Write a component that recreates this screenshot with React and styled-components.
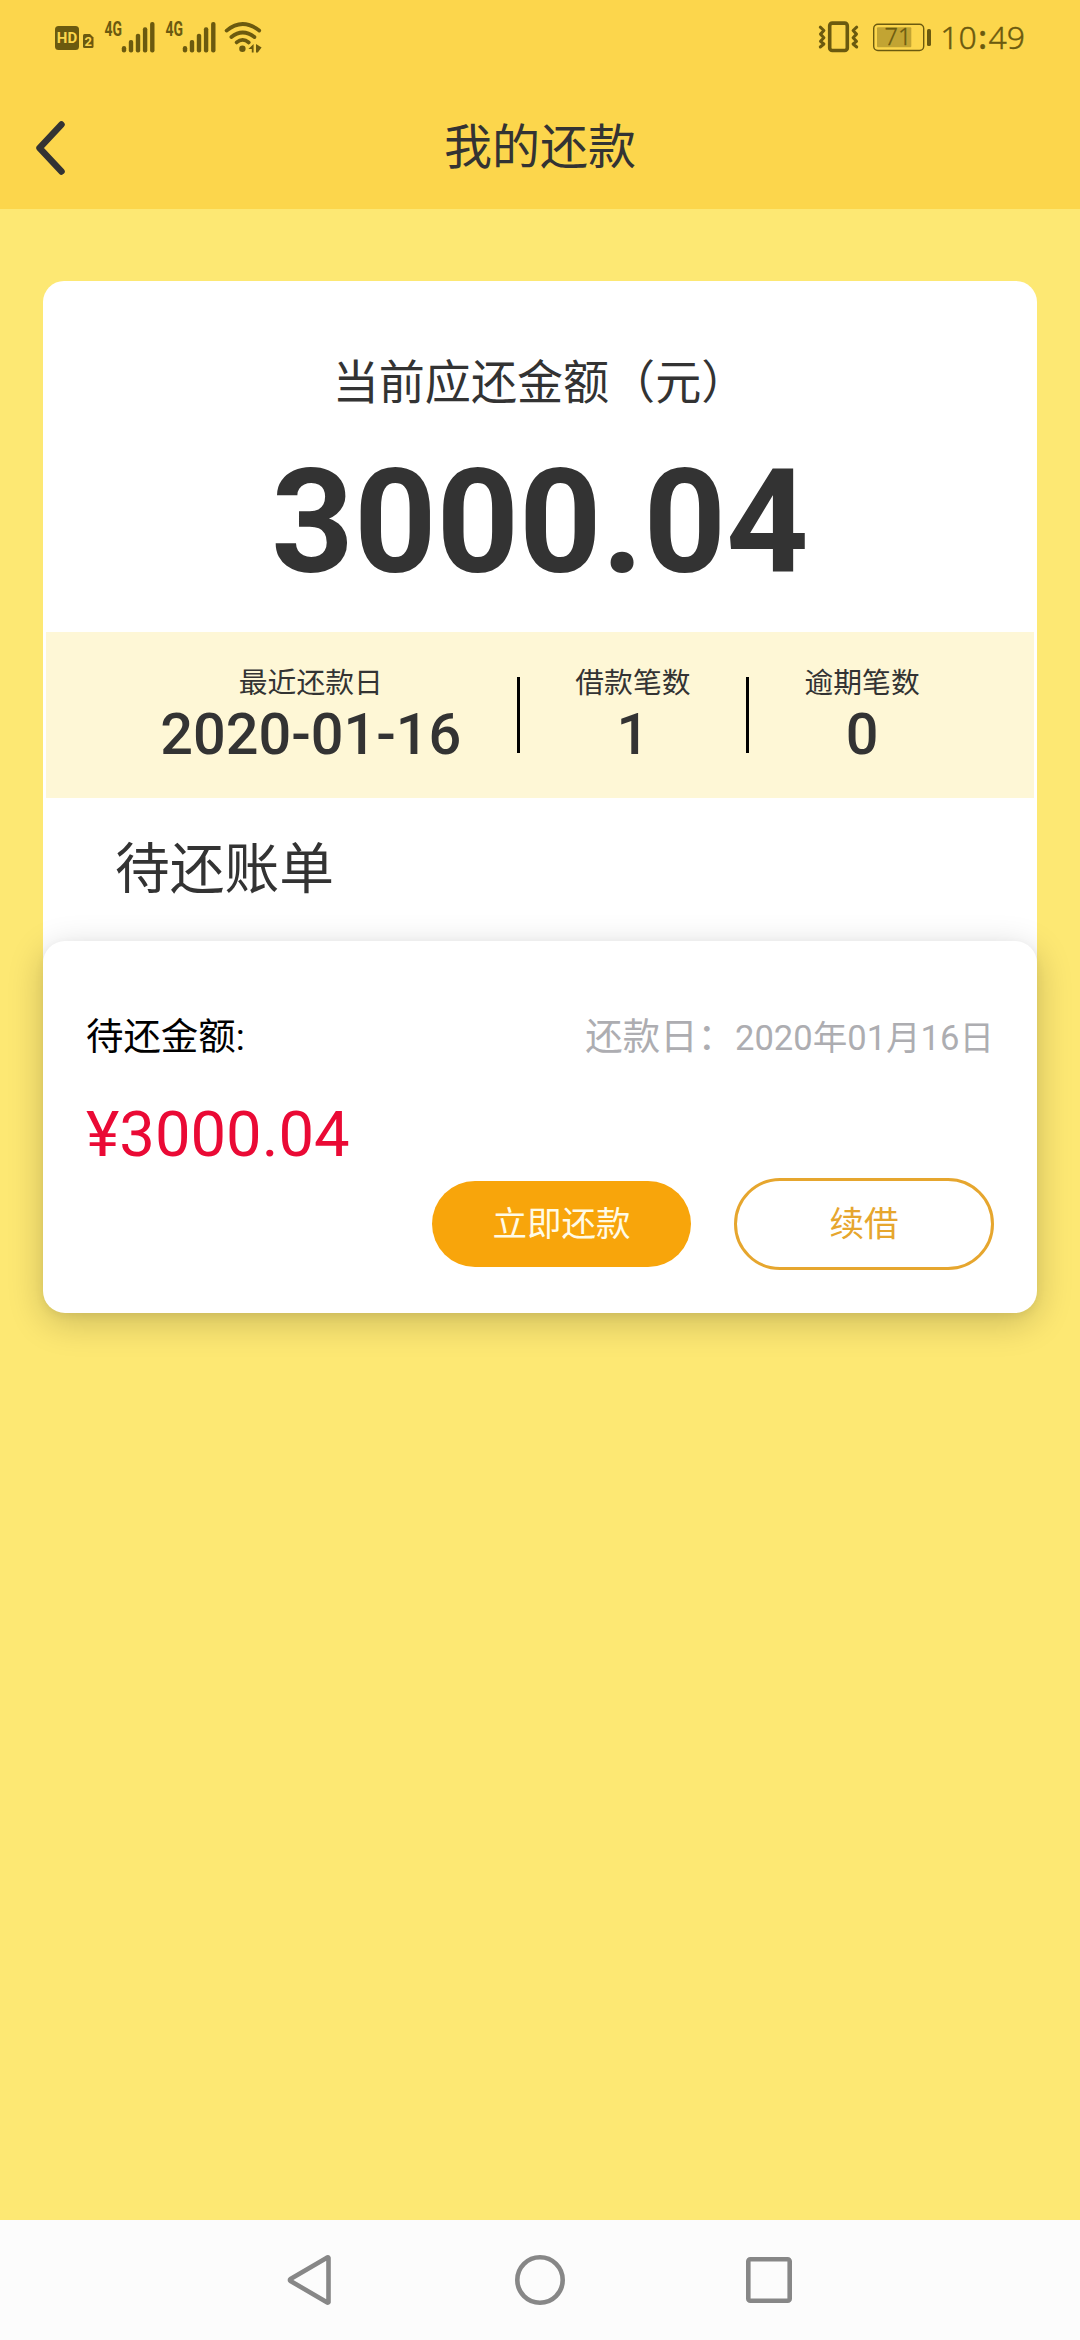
import styled, { createGlobalStyle } from 'styled-components';

const GlobalStyle = createGlobalStyle`
    * {
        box-sizing: border-box;
    }
    body {
        margin: 0;
        background: #fde873;
        font-family: Roboto, "Noto Sans CJK SC", sans-serif;
        color: #333;
    }
`;
const Screen = styled.div`
    display: flex;
    flex-direction: column;
    height: 2340px;
    width: 1080px;
    background: #fde873;
    overflow: hidden;
`;
const Header = styled.header`
    height: 209px;
    background: #fcd64c;
`;
const StatusBar = styled.div`
    display: flex;
    justify-content: space-between;
    height: 87px;
    padding: 20px 55px 0 54px;
`;
const StatusGroup = styled.div`
    display: flex;
    height: 34px;
    gap: ${props => props.$gap};
    color: #6b5a0f;
`;
const StatusIcon = styled.svg`
    display: block;
    flex: none;
    height: 34px;
    overflow: visible;
    fill: currentColor;
`;
const Clock = styled.div`
    display: flex;
    margin-left: -5px;
    font: 300 32px/34px "Noto Sans", sans-serif;
    -webkit-text-stroke: 0.4px currentColor;
`;
const Colon = styled.span`
    margin: 0 1.5px;
    font-weight: 500;
`;
const TitleBar = styled.div`
    display: grid;
    grid-template-columns: 100px 1fr 100px;
    align-items: center;
    height: 122px;
`;
const BackButton = styled.button`
    display: flex;
    padding: 0 0 0 35px;
    border: none;
    background: none;
    cursor: pointer;
`;
const Title = styled.h1`
    margin: 0;
    font-size: 48px;
    font-weight: 400;
    line-height: 60px;
    text-align: center;
`;
const Main = styled.main`
    flex: 1;
    padding: 72px 43px 0;
`;
const Summary = styled.section`
    padding-bottom: 21px;
    background: #fff;
    border-radius: 21px 21px 0 0;
`;
const Total = styled.div`
    height: 351px;
    padding-top: 75px;
    text-align: center;
`;
const TotalLabel = styled.div`
    font-size: 46.08px;
    line-height: 54px;
`;
const TotalAmount = styled.div`
    margin-top: 28px;
    font-size: 144px;
    font-weight: 700;
    line-height: 169px;
`;
const Stats = styled.div`
    display: flex;
    justify-content: center;
    height: 166px;
    margin: 0 3px;
    padding-top: 34px;
    background: #fef7d6;
`;
const Stat = styled.div`
    text-align: center;
`;
const StatLabel = styled.div`
    font-size: 28.8px;
    line-height: 34px;
`;
const StatValue = styled.div`
    font-size: 57.6px;
    font-weight: 500;
    line-height: 70px;
`;
const Divider = styled.div`
    width: 3px;
    height: 76px;
    margin: 11px 55.5px 0;
    background: #000;
`;
const BillsTitle = styled.h2`
    height: 143px;
    margin: 0;
    padding-left: 72px;
    font-size: 54.72px;
    font-weight: 400;
    line-height: 142px;
`;
const Bill = styled.section`
    position: relative;
    height: 372px;
    margin-top: -21px;
    padding: 70px 43px 0;
    background: #fff;
    border-radius: 22px;
    box-shadow: 0 9px 36px rgba(0, 0, 0, 0.2), 0 3px 10px rgba(0, 0, 0, 0.05);
`;
const BillHead = styled.div`
    display: flex;
    justify-content: space-between;
    line-height: 52px;
`;
const BillLabel = styled.span`
    font-size: 37.44px;
    color: #000;
`;
const DueLabel = styled.span`
    font-size: 37.44px;
    color: #adadb1;
`;
const DueDate = styled.span`
    font-size: 34.56px;
`;
const BillAmount = styled.div`
    margin-top: 33px;
    font-size: 63.36px;
    line-height: 74px;
    color: #ea0a35;
`;
const Actions = styled.div`
    display: flex;
    align-items: center;
    justify-content: flex-end;
    gap: 43px;
    margin-top: 7px;
`;
const Button = styled.button`
    width: ${props => props.$outline ? '260px' : '259px'};
    height: ${props => props.$outline ? '92px' : '86px'};
    padding: 0 0 1px;
    border: ${props => props.$outline ? '3px solid #e6a62e' : 'none'};
    border-radius: 46px;
    background: ${props => props.$outline ? '#fff' : '#f8a50b'};
    color: ${props => props.$outline ? '#e6a62e' : '#fffbe6'};
    font-family: inherit;
    font-size: 34.56px;
    line-height: 40px;
    cursor: pointer;
`;
const NavBar = styled.nav`
    display: flex;
    align-items: center;
    justify-content: center;
    gap: 179px;
    height: 120px;
    background: #fcfcfc;
`;
const NavIcon = styled.svg`
    display: block;
    width: 50px;
    height: 50px;
    fill: none;
    stroke: #878787;
    stroke-width: 4.6;
    stroke-linejoin: round;
`;

const HdIcon = () => (
    <StatusIcon width="40" viewBox="54 20 40 34">
        <rect x="55" y="26" width="24" height="24" rx="3.5" />
        <text x="67" y="43.2" textAnchor="middle" fontFamily="Roboto" fontSize="15" fontWeight="700" fill="#fcd64c">HD</text>
        <path d="M84.5 34h5.5l3.5 3.5v9a1.5 1.5 0 0 1-1.5 1.5h-7.5a1.5 1.5 0 0 1-1.5-1.5v-11a1.5 1.5 0 0 1 1.5-1.5z" />
        <text x="88.3" y="45.8" textAnchor="middle" fontFamily="Roboto" fontSize="13" fontWeight="700" fill="#fcd64c">2</text>
    </StatusIcon>
)

const SignalIcon = () => (
    <StatusIcon width="51" viewBox="104 20 51 34">
        <text x="104.5" y="35.8" textLength="17.5" lengthAdjust="spacingAndGlyphs" fontFamily="Roboto" fontSize="19.5" fontWeight="700">4G</text>
        <rect x="121.8" y="46" width="4.4" height="6.5" rx="2.2" />
        <rect x="128.8" y="40" width="4.4" height="12.5" rx="2" />
        <rect x="135.8" y="33.7" width="4.4" height="18.8" rx="2" />
        <rect x="142.9" y="27.3" width="4.4" height="25.2" rx="2" />
        <rect x="150.1" y="22" width="4.4" height="30.5" rx="2" />
    </StatusIcon>
)

const WifiIcon = () => (
    <StatusIcon width="36" viewBox="226 20 36 34">
        <g fill="none" stroke="currentColor" strokeWidth="3.8" strokeLinecap="round">
            <path d="M226.6 30.6Q242.6 17.5 259.2 30.6" />
            <path d="M231.4 37Q242.6 28 254.4 37" />
            <path d="M236.6 42.4Q242.6 37.4 248.8 42.4" />
        </g>
        <circle cx="242.4" cy="48.7" r="3.2" />
        <path d="M253.6 44v8.5h-1.8V49h-3.4z" />
        <path d="M256 44l5.6 3.600-3.800 4.900H256z" />
    </StatusIcon>
)

const VibrateIcon = () => (
    <StatusIcon width="40" viewBox="820 20 40 34">
        <g fill="none" stroke="currentColor" strokeLinecap="round" strokeLinejoin="round">
            <rect x="830.7" y="23.1" width="17.6" height="27.4" rx="2.6" strokeWidth="3.6" />
            <path d="M821.3 27.2l3.6 3.3-3.4 3.6 3.4 3.6-3.4 3.6 3.4 2.7-3.6 3" strokeWidth="3" />
            <path d="M857.7 27.2l-3.6 3.3 3.4 3.6-3.4 3.6 3.4 3.6-3.4 2.7 3.6 3" strokeWidth="3" />
        </g>
    </StatusIcon>
)

const BatteryIcon = () => (
    <StatusIcon width="58" viewBox="874 20 58 34">
        <rect x="874.7" y="24.3" width="50" height="26.2" rx="4.2" fill="none" stroke="currentColor" strokeWidth="1.4" />
        <rect x="878" y="27.3" width="34.3" height="20" rx="1" opacity="0.4" />
        <rect x="928" y="29" width="4" height="17" rx="1.6" />
        <text x="899" y="45" textAnchor="middle" fontFamily="Noto Sans" fontSize="23.5" fontWeight="300" stroke="currentColor" strokeWidth="0.3">71</text>
    </StatusIcon>
)

const stats = [
    {label: '最近还款日', value: '2020-01-16'},
    {label: '借款笔数', value: '1'},
    {label: '逾期笔数', value: '0'},
]

const App = () => {
    return(
        <Screen lang="zh-CN">
            <GlobalStyle/>
            <Header>
                <StatusBar>
                    <StatusGroup $gap="10px">
                        <HdIcon/>
                        <SignalIcon/>
                        <SignalIcon/>
                        <WifiIcon/>
                    </StatusGroup>
                    <StatusGroup $gap="14px">
                        <VibrateIcon/>
                        <BatteryIcon/>
                        <Clock>10<Colon>:</Colon>49</Clock>
                    </StatusGroup>
                </StatusBar>
                <TitleBar>
                    <BackButton aria-label="返回">
                        <svg width="32" height="56" viewBox="0 0 32 56" fill="none" stroke="#333" strokeWidth="6.5" strokeLinecap="round" strokeLinejoin="round">
                            <path d="M26.5 4.5L4.5 28l22 23.5" />
                        </svg>
                    </BackButton>
                    <Title>我的还款</Title>
                </TitleBar>
            </Header>
            <Main>
                <Summary>
                    <Total>
                        <TotalLabel>当前应还金额（元）</TotalLabel>
                        <TotalAmount>3000.04</TotalAmount>
                    </Total>
                    <Stats>
                        {stats.map((stat, i) => [
                            i > 0 && <Divider key={'divider' + i}/>,
                            <Stat key={stat.label}>
                                <StatLabel>{stat.label}</StatLabel>
                                <StatValue>{stat.value}</StatValue>
                            </Stat>
                        ])}
                    </Stats>
                    <BillsTitle>待还账单</BillsTitle>
                </Summary>
                <Bill>
                    <BillHead>
                        <BillLabel>待还金额:</BillLabel>
                        <DueLabel>还款日：<DueDate>2020年01月16日</DueDate></DueLabel>
                    </BillHead>
                    <BillAmount>¥3000.04</BillAmount>
                    <Actions>
                        <Button>立即还款</Button>
                        <Button $outline>续借</Button>
                    </Actions>
                </Bill>
            </Main>
            <NavBar>
                <NavIcon viewBox="0 0 50 50">
                    <path d="M42.5 2.8v44.4q-.6.8-1.6 0L4.5 26q-1.2-1 0-2L40.9 2.8q1-.8 1.6 0z" />
                </NavIcon>
                <NavIcon viewBox="0 0 50 50">
                    <circle cx="25" cy="25" r="22.7" />
                </NavIcon>
                <NavIcon viewBox="0 0 50 50">
                    <rect x="4.3" y="4.3" width="41.4" height="41.4" rx="2" />
                </NavIcon>
            </NavBar>
        </Screen>
    )
}
export default App;
